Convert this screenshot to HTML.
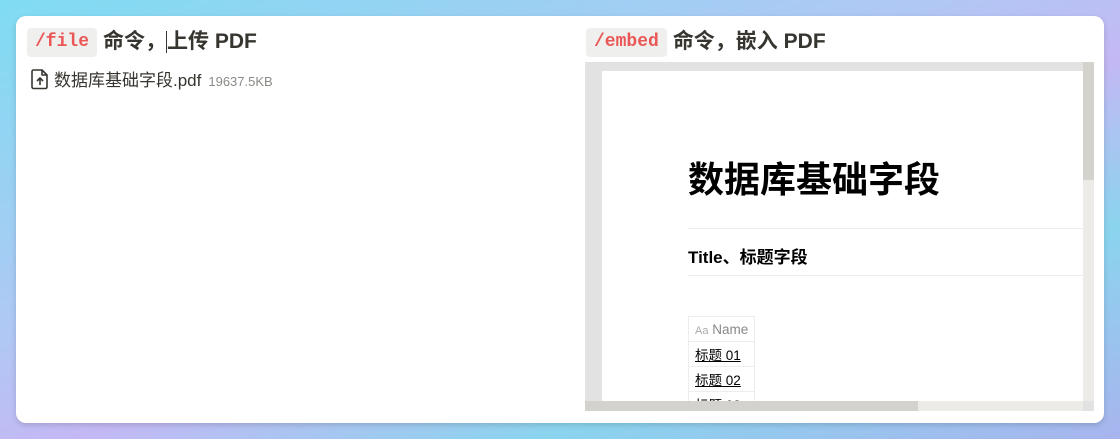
<!DOCTYPE html>
<html><head><meta charset="utf-8"><style>
*{margin:0;padding:0;box-sizing:border-box}
body{width:1120px;height:439px;overflow:hidden;background:linear-gradient(160deg,#7fdcf2 0%,#b0c8f4 40%,#c4b8f4 55%,#8ad4ee 75%,#a8b4ee 100%);font-family:"Liberation Sans","Noto Sans CJK SC",sans-serif;position:relative}
.card{position:absolute;left:16px;top:16px;width:1088px;height:407px;background:#fff;border-radius:10px;box-shadow:0 2px 6px rgba(0,0,0,.15)}
.h{position:absolute;font-size:21px;font-weight:bold;color:#37352f;line-height:30px;white-space:nowrap;display:flex;align-items:center}
.code{display:inline-block;background:#efefed;color:#eb5757;font-family:"Liberation Mono",monospace;font-size:18px;padding:0 8px;border-radius:4px;margin-right:6px;line-height:29px;font-weight:bold}
.file{position:absolute;left:14px;top:50px;font-size:17px;color:#37352f;display:flex;align-items:baseline;white-space:nowrap}
.file small{font-size:13px;color:#8a8a86;margin-left:7px}
.pdf{position:absolute;left:569px;top:46px;width:509px;height:349px;background:#e2e2e2;overflow:hidden}
.page{position:absolute;left:17px;top:9px;width:481px;height:330px;background:#fff;overflow:hidden}
.t1{position:absolute;left:86px;top:80px;font-size:36px;font-weight:bold;color:#000}
.hr{position:absolute;left:86px;height:1px;width:400px;background:#ececec}
.t2{position:absolute;left:86px;top:172px;font-size:17px;font-weight:bold;color:#000}
table{position:absolute;left:86px;top:245px;border-collapse:collapse;font-size:13.5px}
td{border:1px solid #ededed;height:25px;padding:0 6px;white-space:nowrap}
td u{color:#000}
.vs{position:absolute;left:498px;top:0;width:11px;height:339px;background:#ecebe7}
.vs i{position:absolute;left:0;top:0;width:11px;height:118px;background:#d3d2cd}
.hs{position:absolute;left:0;top:339px;width:498px;height:10px;background:#ecebe7}
.hs i{position:absolute;left:0;top:0;width:333px;height:10px;background:#d3d2cd}
</style></head><body>
<div class="card">
<div class="h" style="left:11px;top:11px"><span class="code">/file</span>命令，<span style="border-left:1px solid #37352f;height:22px"></span>上传 PDF</div>
<div class="file"><svg width="20" height="22" viewBox="0 0 20 22" style="margin-right:4px;align-self:center"><path d="M3.5 2h8.5l5 5v12a1.5 1.5 0 0 1-1.5 1.5h-12A1.5 1.5 0 0 1 2 19V3.5A1.5 1.5 0 0 1 3.5 2zM12 2v5h5M10 17v-7M7 13l3-3 3 3" fill="none" stroke="#37352f" stroke-width="1.6" stroke-linejoin="round"/></svg>数据库基础字段.pdf<small>19637.5KB</small></div>
<div class="h" style="left:570px;top:11px"><span class="code">/embed</span>命令，嵌入 PDF</div>
<div class="pdf">
<div class="page">
<div class="t1">数据库基础字段</div>
<div class="hr" style="top:157px"></div>
<div class="t2">Title、标题字段</div>
<div class="hr" style="top:204px"></div>
<table>
<tr><td style="color:#888"><span style="font-size:11px;color:#aaa">Aa</span> Name</td></tr>
<tr><td><u>标题 01</u></td></tr>
<tr><td><u>标题 02</u></td></tr>
<tr><td><u>标题 03</u></td></tr>
</table>
</div>
<div class="vs"><i></i></div>
<div class="hs"><i></i></div>
</div>
</div>
</body></html>
